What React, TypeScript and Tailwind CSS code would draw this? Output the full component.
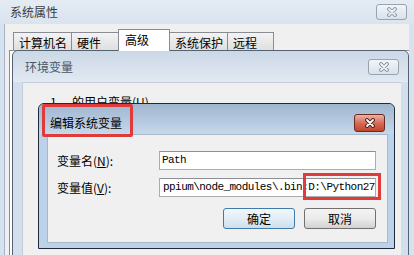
import React from 'react';

const tabs = [
  { label: '计算机名', w: 'w-[59px]' },
  { label: '硬件', w: 'w-[48px]' },
  { label: '高级', w: 'w-[52px]', active: true },
  { label: '系统保护', w: 'w-[59px]' },
  { label: '远程', w: 'w-[47px]' },
];

function CloseX({ active }: { active?: boolean }) {
  const d = 'M3 2 L9 8 M9 2 L3 8';
  return (
    <svg width="12" height="10" viewBox="0 0 12 10">
      <path d={d} stroke={active ? '#4a1a12' : '#8593a3'} strokeWidth="3.8" strokeLinecap="round" fill="none" />
      <path d={d} stroke={active ? '#ffffff' : '#f3f5f8'} strokeWidth="1.8" strokeLinecap="round" fill="none" />
    </svg>
  );
}

function CloseButton({ active }: { active?: boolean }) {
  return (
    <div
      className={
        active
          ? 'flex h-[18px] w-[31px] items-center justify-center rounded-[3px] border border-[#6b2a1f] bg-linear-to-b from-[#eab3a6] via-[#d66c55] to-[#c1452c]'
          : 'flex h-[16px] w-[31px] items-center justify-center rounded-[3px] border border-[#96a3b3] bg-linear-to-b from-[#f2f5f8] to-[#d9e1ea]'
      }
    >
      <CloseX active={active} />
    </div>
  );
}

function Label({ text, keyChar }: { text: string; keyChar: string }) {
  return (
    <div className="w-[102px] text-[12px] leading-none text-black">
      {text}(<span className="underline">{keyChar}</span>):
    </div>
  );
}

export default function App() {
  return (
    <div className="relative h-[255px] w-[414px] overflow-hidden bg-[#d6e2ef] font-['Noto_Sans_CJK_SC',sans-serif] text-[12px]">
      {/* 系统属性 */}
      <div className="flex h-full flex-col">
        <div className="flex h-[24px] items-center justify-between bg-linear-to-b from-[#e4ebf3] to-[#dae4ef] pl-[10px] pr-[7px]">
          <span className="leading-none text-[#3c3c3c]">系统属性</span>
          <CloseButton />
        </div>
        <div className="ml-[4px] mr-[5px] flex flex-1 flex-col border-l border-[#a7b4c3] bg-[#f0f0f0] pl-[4px] pt-[5px]">
          <div className="ml-[5px] flex h-[22px] items-end">
            {tabs.map((t) => (
              <div
                key={t.label}
                className={
                  t.active
                    ? `${t.w} relative z-10 -ml-px flex h-[22px] items-start border border-b-0 border-[#898c95] bg-white pl-[6px] pt-[3px] text-black`
                    : `${t.w} -ml-px flex h-[19px] items-start border border-b-0 border-[#898c95] bg-linear-to-b from-[#f3f3f3] to-[#dedede] pl-[5px] pt-[3px] text-black`
                }
              >
                <span className="leading-[14px]">{t.label}</span>
              </div>
            ))}
          </div>
          <div className="-mt-px flex-1 border-l border-t border-[#898c95] bg-white" />
        </div>
      </div>

      {/* 环境变量 */}
      <div className="absolute left-[12px] top-[50px] flex h-[230px] w-[397px] flex-col rounded-t-[6px] border border-[#55626f] bg-[#d3dfec]">
        <div className="flex h-[31px] items-center justify-between rounded-t-[6px] bg-linear-to-b from-[#cbd8e6] to-[#e2e9f2] pl-[12px] pr-[9px] pt-[1px]">
          <span className="leading-none text-[#4b5663]">环境变量</span>
          <CloseButton />
        </div>
        <div className="flex flex-1 pl-[9px] pr-[7px]">
          <div className="flex-1 border-l border-t border-[#c4ccd6] bg-[#f0f0f0] pl-[27px] pt-[13px]">
            <div className="flex leading-none text-black">
              <span className="w-[22px]">1.</span>
              <span>的用户变量(U)</span>
            </div>
          </div>
        </div>
      </div>

      {/* 编辑系统变量 */}
      <div className="absolute left-[38px] top-[103px] flex h-[146px] w-[357px] flex-col rounded-t-[6px] border border-[#1f2a36] bg-[#bcd2ea]">
        <div className="flex h-[30px] items-center justify-between rounded-t-[6px] bg-linear-to-b from-[#9fb6cf] to-[#c6d8eb] pl-[11px] pr-[9px] pt-[8px]">
          <span className="leading-none text-black">编辑系统变量</span>
          <div className="-mt-[1px]">
            <CloseButton active />
          </div>
        </div>
        <div className="flex flex-1 pb-[5px] pl-[8px] pr-[6px]">
          <div className="flex flex-1 flex-col border border-[#a9b8c8] bg-[#f0f0f0] pl-[9px] pr-[11px] pt-[16px]">
            <div className="flex items-center">
              <Label text="变量名" keyChar="N" />
              <div className="flex h-[19px] w-[217px] items-center border border-[#abadb3] border-t-[#8c8f96] bg-white pl-[2px] font-['Liberation_Mono',monospace] text-[11px] tracking-[-0.6px] text-black">
                Path
              </div>
            </div>
            <div className="mt-[8px] flex items-center">
              <Label text="变量值" keyChar="V" />
              <div className="flex h-[19px] w-[217px] items-center whitespace-nowrap border border-[#abadb3] border-t-[#8c8f96] bg-white pl-[3px] font-['Liberation_Mono',monospace] text-[11px] tracking-[-0.55px] text-black">
                ppium\node_modules\.bin;D:\Python27
              </div>
            </div>
            <div className="mt-[11px] flex justify-end gap-[9px]">
              <div className="flex h-[21px] w-[72px] items-center justify-center rounded-[3px] border border-[#3f7aa8] bg-linear-to-b from-[#f2f7fb] via-[#e3edf5] to-[#cddfec] leading-none text-black">
                确定
              </div>
              <div className="flex h-[21px] w-[72px] items-center justify-center rounded-[3px] border border-[#707070] bg-linear-to-b from-[#f3f3f3] via-[#ebebeb] to-[#d2d2d2] leading-none text-black">
                取消
              </div>
            </div>
          </div>
        </div>
      </div>

      {/* red annotations */}
      <div className="absolute left-[42px] top-[104px] h-[33px] w-[91px] rounded-[2px] border-[3px] border-[#e03b3b]" />
      <div className="absolute left-[303px] top-[173px] h-[27px] w-[78px] border-[3px] border-[#e03b3b]" />
    </div>
  );
}
